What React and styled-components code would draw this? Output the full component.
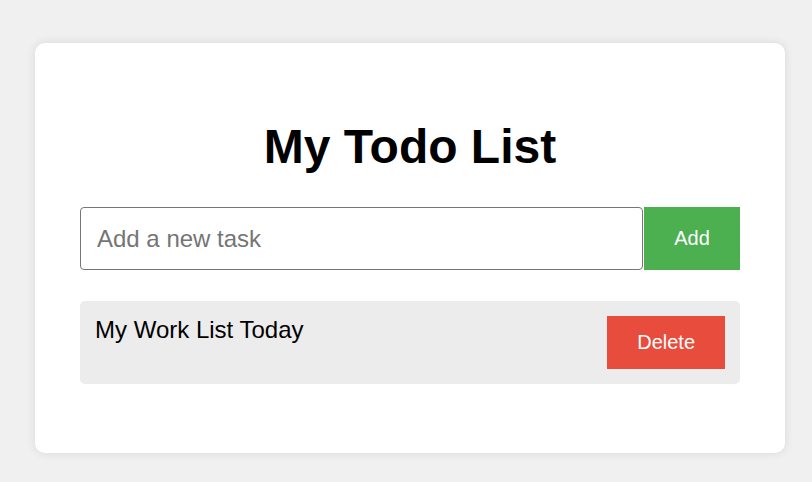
import React, { useState } from "react";
import styled, { createGlobalStyle } from "styled-components";

const GlobalStyle = createGlobalStyle`
  html, body {
    margin: 0;
    padding: 0;
    background: #f0f0f0;
    font-family: "Liberation Sans", Arial, sans-serif;
  }
`;

const Page = styled.div`
  padding: 43px 27px 29px 35px;
`;

const Card = styled.div`
  box-sizing: border-box;
  width: 750px;
  height: 410px;
  background: #fff;
  border-radius: 10px;
  box-shadow: 0 0 10px rgba(0, 0, 0, 0.1);
  padding: 76px 45px 45px;
`;

const Title = styled.h1`
  margin: 0 0 33px;
  text-align: center;
  font-size: 48px;
  font-weight: bold;
  color: #000;
`;

const InputRow = styled.div`
  display: flex;
  align-items: stretch;
  height: 63px;
  margin-bottom: 31px;
`;

const TaskInput = styled.input`
  flex: 1;
  box-sizing: border-box;
  min-width: 0;
  height: 63px;
  padding: 0 16px;
  border: 1px solid #767676;
  border-radius: 4px;
  font-family: inherit;
  font-size: 24px;
  color: #000;
  margin-right: 1px;
  &::placeholder {
    color: #757575;
  }
  &:focus {
    outline: none;
  }
`;

const Button = styled.button`
  border: none;
  border-radius: 0;
  padding: 15px 30px;
  font-family: inherit;
  font-size: 20px;
  color: #fff;
  background: ${(p) => p.$bg};
  cursor: pointer;
`;

const List = styled.ul`
  list-style: none;
  margin: 0;
  padding: 0;
`;

const Item = styled.li`
  display: flex;
  justify-content: space-between;
  align-items: flex-start;
  padding: 15px;
  background: #ececec;
  border-radius: 5px;
  margin-bottom: 10px;
`;

const ItemText = styled.span`
  font-size: 24px;
  color: #000;
`;

export default function App() {
  const [tasks, setTasks] = useState(["My Work List Today"]);
  const [text, setText] = useState("");

  const addTask = () => {
    if (!text.trim()) return;
    setTasks([...tasks, text.trim()]);
    setText("");
  };

  return (
    <>
      <GlobalStyle />
      <Page>
        <Card>
          <Title>My Todo List</Title>
          <InputRow>
            <TaskInput
              placeholder="Add a new task"
              value={text}
              onChange={(e) => setText(e.target.value)}
            />
            <Button $bg="#4caf50" style={{ width: 96 }} onClick={addTask}>
              Add
            </Button>
          </InputRow>
          <List>
            {tasks.map((t, i) => (
              <Item key={i}>
                <ItemText>{t}</ItemText>
                <Button
                  $bg="#e74c3c"
                  onClick={() => setTasks(tasks.filter((_, j) => j !== i))}
                >
                  Delete
                </Button>
              </Item>
            ))}
          </List>
        </Card>
      </Page>
    </>
  );
}
